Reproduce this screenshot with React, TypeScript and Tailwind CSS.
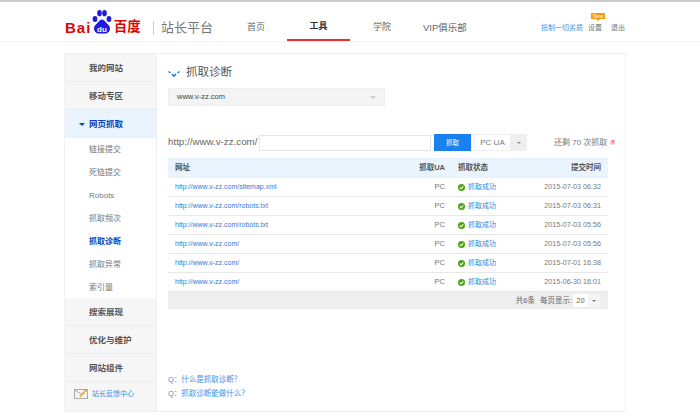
const cjk = "font-['Liberation_Sans','Noto_Sans_CJK_SC',sans-serif]";

const rows = [
  ["http://www.v-zz.com/sitemap.xml", "2015-07-03 06:32"],
  ["http://www.v-zz.com/robots.txt", "2015-07-03 06:31"],
  ["http://www.v-zz.com/robots.txt", "2015-07-03 05:56"],
  ["http://www.v-zz.com/", "2015-07-03 05:56"],
  ["http://www.v-zz.com/", "2015-07-01 16:38"],
  ["http://www.v-zz.com/", "2015-06-30 16:01"],
];

const subItems = ["链接提交", "死链提交", "Robots", "抓取频次", "抓取诊断", "抓取异常", "索引量"];

function BaiduLogo() {
  return (
    <div className="flex items-end h-[24px] w-[77px] self-start -mt-[5px]">
      <span className="text-[15px] leading-[13px] tracking-[1px] font-bold text-[#e10601] font-['Liberation_Sans',sans-serif]">Bai</span>
      <svg viewBox="0 0 22 24" className="w-[22px] h-[24px] shrink-0 -ml-[0.5px]">
        <ellipse cx="4" cy="9" rx="2.4" ry="3" fill="#2319dc" />
        <ellipse cx="8.5" cy="3.2" rx="2.3" ry="3.1" fill="#2319dc" />
        <ellipse cx="13.5" cy="3.2" rx="2.3" ry="3.1" fill="#2319dc" />
        <ellipse cx="18" cy="9" rx="2.4" ry="3" fill="#2319dc" />
        <path d="M11 9.5c-2.6 0-3.4 2.4-5 4s-3 2.6-3 5 2 5 4.500 5h7c2.500 0 4.500-2.500 4.500-5s-1.400-3.400-3-5-2.400-4-5-4z" fill="#2319dc" />
        <text x="11" y="21.500" fontSize="8" fill="#fff" textAnchor="middle" fontFamily="Liberation Sans" fontWeight="bold">du</text>
      </svg>
      <span className={`ml-[1px] text-[13.5px] leading-[14px] font-bold text-[#e10601] whitespace-nowrap ${cjk}`}>百度</span>
    </div>
  );
}

function Check() {
  return (
    <svg viewBox="0 0 8 8" className="w-[7px] h-[7px] shrink-0">
      <circle cx="4" cy="4" r="4" fill="#4aa511" />
      <path d="M2 4l1.500 1.500L6 2.800" stroke="#fff" strokeWidth="1.200" fill="none" />
    </svg>
  );
}

function SideRow({ label }: { label: string }) {
  return (
    <div className="h-[28px] pt-[1px] border-b border-[#ececec] flex items-center pl-[24px] text-[8.5px] font-bold text-[#555]">
      {label}
    </div>
  );
}

function Sidebar() {
  return (
    <div className="w-[92px] shrink-0 bg-[#f6f6f6] border-r border-[#eeeeee] flex flex-col">
      <SideRow label="我的网站" />
      <SideRow label="移动专区" />
      <div className="h-[28px] pt-[1px] bg-[#eaf4fe] flex items-center pl-[14px] gap-[3px] text-[8.5px] font-bold text-[#0b3fb5]">
        <span className="w-0 h-0 border-x-[3px] border-x-transparent border-t-[3px] border-t-[#0b3fb5]" />
        <span className="ml-[1px]">网页抓取</span>
      </div>
      <div className="bg-white h-[160px] flex flex-col">
        {subItems.map((s) => (
          <div
            key={s}
            className={`h-[23px] shrink-0 pt-[1px] flex items-center pl-[24px] text-[8px] ${s === "抓取诊断" ? "font-bold text-[#0b3fb5]" : "text-[#777]"}`}
          >
            {s}
          </div>
        ))}
      </div>
      <SideRow label="搜索展现" />
      <SideRow label="优化与维护" />
      <SideRow label="网站组件" />
      <div className="flex-1 flex items-start pt-[7px] pl-[9px] gap-[4px] text-[7px] text-[#3f8de8]">
        <svg viewBox="0 0 14 10" className="w-[14px] h-[10px] shrink-0">
          <rect x="0.5" y="0.5" width="13" height="9" fill="#f3f3f3" stroke="#aaa" />
          <path d="M1 1l6 4 6-4" stroke="#aaa" fill="none" />
          <path d="M6 8l6-7" stroke="#f0a81e" strokeWidth="1.600" />
        </svg>
        站长反馈中心
      </div>
    </div>
  );
}

function RecordsTable() {
  return (
    <div className="w-[440px] mt-[7px]">
      <div className="h-[20px] bg-[#eaf4fe] flex items-center text-[7.5px] font-bold text-[#555]">
        <div className="w-[247px] pl-[7px]">网址</div>
        <div className="w-[30px] text-right whitespace-nowrap">抓取UA</div>
        <div className="w-[13px]" />
        <div className="w-[65px]">抓取状态</div>
        <div className="w-[78px] text-right">提交时间</div>
      </div>
      {rows.map((r, i) => (
        <div key={i} className="h-[19px] border-b border-[#e8e8e8] flex items-center text-[7.5px]">
          <div className="w-[247px] pl-[7px] text-[#3a78d8] text-[7px]">{r[0]}</div>
          <div className="w-[30px] text-right text-[#777]">PC</div>
          <div className="w-[13px]" />
          <div className="w-[65px] flex items-center gap-[3px] text-[7px] text-[#2f8ae6]">
            <Check />
            抓取成功
          </div>
          <div className="w-[78px] text-right text-[7.2px] text-[#777] whitespace-nowrap">{r[1]}</div>
        </div>
      ))}
      <div className="h-[17px] bg-[#eeeeee] flex items-center justify-end pr-[8px] text-[7.5px] text-[#666]">
        <span className="mr-[5px]">共6条</span>
        <span>每页显示:</span>
        <span className="w-[15px] h-[13px] ml-[1px] bg-white flex items-center justify-center">20</span>
        <span className="w-[12px] h-[13px] bg-[#f4f4f4] flex items-center justify-center">
          <span className="w-0 h-0 border-x-[2px] border-x-transparent border-t-[2px] border-t-[#777]" />
        </span>
      </div>
    </div>
  );
}

export default function App() {
  return (
    <div className={`w-[700px] h-[419px] overflow-hidden bg-white flex flex-col ${cjk}`}>
      {/* Top bar */}
      <div className="h-[42px] shrink-0 border-t-2 border-t-[#cccccc] border-b border-b-[#f1f1f1] flex items-center pl-[65px] pt-[13px]">
        <BaiduLogo />
        <div className="w-px h-[14px] bg-[#cccccc] ml-[11px] mr-[8px]" />
        <span className="text-[13px] text-[#777] w-[67px] -ml-[1px] whitespace-nowrap">站长平台</span>
        <nav className="flex items-center self-stretch text-[9px] text-[#666]">
          <span className="w-[56px] text-center">首页</span>
          <span className="w-[63px] ml-[3px] self-stretch flex items-center justify-center font-bold text-[#333] border-b-2 border-b-[#e83030]">工具</span>
          <span className="w-[64px] text-center">学院</span>
          <span className="ml-[9px] w-[60px] text-[9.5px] whitespace-nowrap">VIP俱乐部</span>
        </nav>
        <div className="ml-[58px] flex items-center text-[7px] text-[#777]">
          <span className="text-[#3f8de8] w-[47px] whitespace-nowrap">抵制一切劣质</span>
          <span className="relative">
            设置
            <span className="absolute -top-[10px] left-[3px] w-[14px] h-[6px] bg-[#f59a0c] text-white text-[5px] leading-[6px] text-center">
              New
              <span className="absolute top-[6px] left-[5px] w-0 h-0 border-x-[2px] border-x-transparent border-t-[2px] border-t-[#f59a0c]" />
            </span>
          </span>
          <span className="ml-[9px]">退出</span>
        </div>
      </div>

      {/* Main panel */}
      <div className="ml-[64px] mt-[11px] w-[562px] h-[359px] border border-[#f1f1f1] flex">
        <Sidebar />
        <div className="flex-1 pl-[11px] flex flex-col">
          <div className="flex items-center gap-[6px] h-[34px] pt-[4px]">
            <svg viewBox="0 0 12 7" className="w-[12px] h-[7px]">
              <path d="M0.500 1.500l2 1.500M4 4l2 2.200 2-2.200M9.500 3l2-1.500" stroke="#1a78e0" strokeWidth="1.500" fill="none" />
            </svg>
            <span className="text-[11.5px] text-[#555]">抓取诊断</span>
          </div>
          <div className="w-[217px] h-[18px] bg-[#f4f4f4] border border-[#eeeeee] flex items-center justify-between pl-[8px] pr-[8px] text-[7.5px] text-[#444]">
            www.v-zz.com
            <span className="w-0 h-0 border-x-[3px] border-x-transparent border-t-[3px] border-t-[#cccccc]" />
          </div>
          <div className="flex items-center h-[17px] mt-[28px] text-[#666]">
            <span className="w-[91px] text-[9.75px] whitespace-nowrap">http://www.v-zz.com/</span>
            <div className="w-[172px] h-[16px] bg-white border border-[#e6e6e6]" />
            <div className="w-[37px] h-[17px] ml-[3px] bg-[#1a82f0] text-white text-[6.5px] flex items-center justify-center">抓取</div>
            <div className="w-[37px] h-[17px] ml-[3px] border border-[#eeeeee] flex items-center justify-center text-[8px] text-[#777]">PC UA</div>
            <div className="w-[16px] h-[17px] bg-[#eeeeee] flex items-center justify-center">
              <span className="w-0 h-0 border-x-[2px] border-x-transparent border-t-[2px] border-t-[#888]" />
            </div>
            <span className="ml-[27px] text-[8px] text-[#777] whitespace-nowrap">还剩 70 次抓取</span>
            <span className="ml-[3px] w-[5px] h-[5px] rounded-full bg-[#f7c6c6] text-[#d02020] text-[5px] leading-[5px] text-center">?</span>
          </div>
          <RecordsTable />
          <div className="mt-auto mb-[12px] flex flex-col gap-[3px] text-[7.5px] text-[#3f8de8]">
            <span>Q：什么是抓取诊断？</span>
            <span>Q：抓取诊断能做什么？</span>
          </div>
        </div>
      </div>
    </div>
  );
}
